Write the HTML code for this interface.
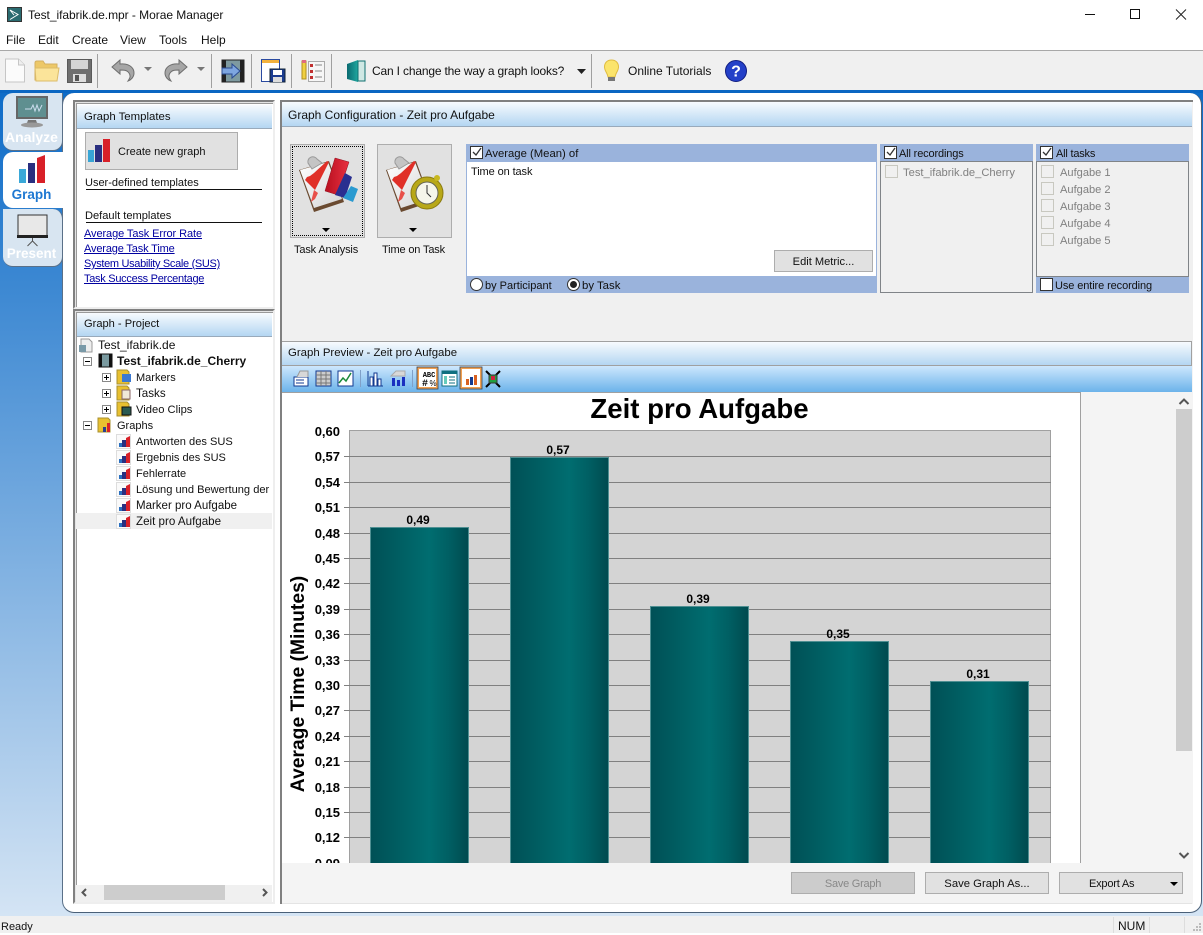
<!DOCTYPE html>
<html><head><meta charset="utf-8">
<style>
html,body{margin:0;padding:0}
body{width:1203px;height:933px;overflow:hidden;position:relative;background:#fff;font-family:"Liberation Sans",sans-serif;font-size:12px;color:#111}
.a,.t,svg{position:absolute}
.t{white-space:nowrap;line-height:16px}
.hd{position:absolute;background:linear-gradient(#f7fbfe,#b4d6f2);box-sizing:border-box;white-space:nowrap;line-height:16px}
.btn{position:absolute;box-sizing:border-box;background:#e1e1e1;border:1px solid #adadad;text-align:center;line-height:22px}
.lnk{color:#0000a0;text-decoration:underline;font-size:11px}
.cb{position:absolute;box-sizing:border-box;width:13px;height:13px;border:1px solid #333;background:#fff}
.cd{position:absolute;box-sizing:border-box;width:13px;height:13px;border:1px solid #c8c8c0;background:#f0f0f0}
.gr{color:#808080}
.sep{position:absolute;width:1px;background:#a0a0a0;top:54px;height:34px}
.hl{position:absolute;height:1px;background:#111}
.ex{position:absolute;box-sizing:border-box;width:9px;height:9px;border:1px solid #888;background:#fff}
.ex:before{content:"";position:absolute;left:1px;top:3px;width:5px;height:1px;background:#000}
.ex.p:after{content:"";position:absolute;left:3px;top:1px;width:1px;height:5px;background:#000}
</style></head><body>

<!-- title bar -->
<svg style="left:7px;top:7px" width="15" height="15" viewBox="0 0 15 15"><rect x=".5" y=".5" width="14" height="14" fill="#2a6b70" stroke="#333"/><path d="M3 3l8 4.500-8 5M3 3l4 5" stroke="#fff" stroke-width="1" fill="none"/></svg>
<div class="t" style="left:28px;top:7px;font-size:12px;letter-spacing:-.04px">Test_ifabrik.de.mpr - Morae Manager</div>
<svg style="left:1080px;top:8px" width="115" height="14" viewBox="0 0 115 14"><path d="M5 6.500h10" stroke="#111"/><rect x="50.500" y="1.500" width="9" height="9" fill="none" stroke="#111"/><path d="M96 1.500l10 10M106 1.500l-10 10" stroke="#222"/></svg>

<!-- menu -->
<div class="t" style="left:6px;top:32px">File</div>
<div class="t" style="left:38px;top:32px">Edit</div>
<div class="t" style="left:72px;top:32px">Create</div>
<div class="t" style="left:120px;top:32px">View</div>
<div class="t" style="left:159px;top:32px">Tools</div>
<div class="t" style="left:201px;top:32px">Help</div>

<!-- toolbar -->
<div class="a" style="left:0;top:50px;width:1203px;height:41px;background:#f0f0f0;border-top:1px solid #a8a8a8;box-sizing:border-box"></div>
<div class="a" style="left:0;top:90px;width:1203px;height:3px;background:#0a66c2"></div>
<svg style="left:4px;top:58px" width="22" height="26" viewBox="0 0 22 26"><path d="M1.500 1h13l6 6v17h-19z" fill="#fbfbfb" stroke="#c6c6c6"/><path d="M14.500 1v6h6" fill="#eee" stroke="#c6c6c6"/></svg>
<svg style="left:34px;top:59px" width="26" height="24" viewBox="0 0 26 24"><path d="M1 4q0-2 2-2h6l2 3h12v16H1z" fill="#edc868" stroke="#d4b060"/><path d="M1 9h24l-2 13H2z" fill="#fbe49a" stroke="#dcbc6a"/></svg>
<svg style="left:67px;top:59px" width="25" height="24" viewBox="0 0 25 24"><rect x=".5" y=".5" width="24" height="23" fill="#6f6f6f" stroke="#5a5a5a"/><rect x="4" y="1" width="17" height="9" fill="#d4d4d4"/><rect x="6" y="15" width="13" height="8" fill="#dedede"/><rect x="8" y="16" width="4" height="6" fill="#555"/></svg>
<div class="sep" style="left:97px"></div>
<svg style="left:110px;top:58px" width="26" height="24" viewBox="0 0 26 24"><path d="M2 9l8-7v4c8-1 14 3 14 9 0 4-3 7-6 8 2-3 3-5 1-8-2-3-5-3-9-3v4z" fill="#a6a6a6" stroke="#6e6e6e"/></svg>
<svg style="left:144px;top:67px" width="8" height="5"><path d="M0 0h8l-4 4z" fill="#777"/></svg>
<svg style="left:163px;top:58px" width="26" height="24" viewBox="0 0 26 24"><path d="M24 9l-8-7v4C8 5 2 9 2 15c0 4 3 7 6 8-2-3-3-5-1-8 2-3 5-3 9-3v4z" fill="#a6a6a6" stroke="#6e6e6e"/></svg>
<svg style="left:197px;top:67px" width="8" height="5"><path d="M0 0h8l-4 4z" fill="#777"/></svg>
<div class="sep" style="left:211px"></div>
<svg style="left:221px;top:59px" width="24" height="24" viewBox="0 0 24 24"><rect x="1" y="1" width="22" height="22" fill="#7e9aa0" stroke="#222"/><rect x="1" y="1" width="4" height="22" fill="#222"/><rect x="19" y="1" width="4" height="22" fill="#222"/><path d="M1 9h10V5l8 7-8 7v-4H1z" fill="#7ea6e0" stroke="#2a4a90"/></svg>
<div class="sep" style="left:251px"></div>
<svg style="left:261px;top:59px" width="25" height="24" viewBox="0 0 25 24"><rect x=".5" y=".5" width="18" height="22" fill="#fff" stroke="#2a4aa0"/><rect x="1" y="1" width="17" height="3" fill="#f3b23c"/><rect x="9" y="10" width="15" height="13" fill="#1c3c90" stroke="#123"/><rect x="12" y="11" width="9" height="5" fill="#fff"/><rect x="12" y="18" width="9" height="5" fill="#ddd"/></svg>
<div class="sep" style="left:291px"></div>
<svg style="left:301px;top:60px" width="24" height="22" viewBox="0 0 24 22"><rect x="1" y="1" width="4" height="18" fill="#f0d040" stroke="#b09020"/><rect x="1" y="0" width="4" height="3" fill="#e06a80"/><rect x="7.500" y="1.500" width="16" height="20" fill="#f6f6f6" stroke="#aaa"/><rect x="9" y="4" width="3" height="3" fill="#c03030"/><rect x="9" y="10" width="3" height="3" fill="#c03030"/><rect x="9" y="16" width="3" height="3" fill="#c03030"/><path d="M14 5h7M14 11h7M14 17h7" stroke="#888"/></svg>
<div class="sep" style="left:331px"></div>
<svg style="left:346px;top:60px" width="20" height="22" viewBox="0 0 20 22"><defs><linearGradient id="dr" x1="0" x2="1"><stop offset="0" stop-color="#0a6a70"/><stop offset="1" stop-color="#20a8a0"/></linearGradient></defs><path d="M1 4l11-4v22L1 19z" fill="url(#dr)"/><rect x="12" y="1" width="7" height="20" fill="#cfe8e4" stroke="#0f6f70"/></svg>
<div class="t" style="left:372px;top:63px;letter-spacing:-.17px">Can I change the way a graph looks?</div>
<svg style="left:577px;top:69px" width="9" height="5"><path d="M0 0h9l-4.500 5z" fill="#222"/></svg>
<div class="sep" style="left:591px"></div>
<svg style="left:604px;top:59px" width="17" height="24" viewBox="0 0 17 24"><path d="M7.500 1C3 1 0.500 4 0.500 8c0 4 3 6 3.500 10h7c.5-4 3.500-6 3.500-10 0-4-2.500-7-7-7z" fill="#fbe46c" stroke="#e0bc40"/><rect x="4" y="18" width="7" height="4" fill="#777"/></svg>
<div class="t" style="left:628px;top:63px">Online Tutorials</div>
<svg style="left:725px;top:60px" width="22" height="22" viewBox="0 0 22 22"><circle cx="11" cy="11" r="10.500" fill="#2440c8" stroke="#101c80"/><text x="11" y="16.500" text-anchor="middle" font-family="Liberation Sans" font-weight="bold" font-size="16" fill="#fff">?</text></svg>

<!-- blue area -->
<div class="a" style="left:0;top:93px;width:1203px;height:823px;background:linear-gradient(#0e6cc8,#d4e4f4)"></div>
<div class="a" style="left:62px;top:93px;width:1140px;height:820px;background:#fff;border-radius:12px;border-right:1px solid #4a6078;border-bottom:1px solid #4a6078;border-left:1px solid #5a7088;box-sizing:border-box"></div>
<div class="a" style="left:0;top:916px;width:1203px;height:17px;background:#f0f0f0"></div>
<div class="t" style="left:1px;top:919px;font-size:11px">Ready</div>
<div class="a" style="left:1113px;top:917px;width:1px;height:16px;background:#ddd"></div>
<div class="a" style="left:1149px;top:917px;width:1px;height:16px;background:#ddd"></div>
<div class="a" style="left:1184px;top:917px;width:1px;height:16px;background:#ddd"></div>
<div class="t" style="left:1118px;top:918px">NUM</div>
<svg style="left:1192px;top:922px" width="10" height="10"><path d="M7 1h2v2H7zM4 4h2v2H4zM7 4h2v2H7zM1 7h2v2H1zM4 7h2v2H4zM7 7h2v2H7z" fill="#bbb"/></svg>

<!-- side tabs -->
<div class="a" style="left:3px;top:93px;width:60px;height:58px;background:#d8e5f1;border-radius:10px 0 10px 10px;border-right:1px solid #5a7088;border-bottom:1px solid #5a7088;box-sizing:border-box"></div>
<svg style="left:15px;top:96px" width="34" height="34" viewBox="0 0 34 34"><rect x="2" y="1" width="30" height="21" fill="#5f8f90" stroke="#666" stroke-width="2"/><path d="M10 13h6l2-4 2 6 2-6 2 6 3-6" stroke="#cde" fill="none"/><path d="M13 24h8l1 3h-10z" fill="#777"/><ellipse cx="17" cy="29" rx="11" ry="2.500" fill="#999"/></svg>
<div class="t" style="left:0;top:129px;width:63px;text-align:center;font-weight:bold;font-size:14px;color:#fff">Analyze</div>
<div class="a" style="left:3px;top:152px;width:60px;height:56px;background:#fff;border-radius:10px 0 0 10px"></div>
<svg style="left:18px;top:155px" width="29" height="30" viewBox="0 0 29 30"><rect x="1" y="14" width="7" height="14" fill="#3aa8d8"/><rect x="10" y="8" width="7" height="20" fill="#2a2f80"/><path d="M19 3l8-3v28h-8z" fill="#d82028"/></svg>
<div class="t" style="left:0;top:187px;width:63px;text-align:center;font-weight:bold;font-size:13.500px;color:#1e78d2">Graph</div>
<div class="a" style="left:3px;top:209px;width:60px;height:58px;background:#d8e5f1;border-radius:0 10px 10px 10px;border-right:1px solid #5a7088;border-bottom:1px solid #5a7088;box-sizing:border-box"></div>
<svg style="left:17px;top:214px" width="31" height="33" viewBox="0 0 31 33"><rect x="1" y="1" width="29" height="21" fill="#e8e8e8" stroke="#333"/><rect x="0" y="21" width="31" height="3" fill="#222"/><path d="M15.500 24v3l-5 5M15.500 27l5 5" stroke="#555" fill="none"/></svg>
<div class="t" style="left:0;top:246px;width:63px;text-align:center;font-weight:bold;font-size:13.500px;color:#fff">Present</div>

<!-- Left panel: Templates -->
<div class="a" style="left:73px;top:100px;width:202px;height:209px;border:2px solid #808080;border-right-color:#eee;border-bottom-color:#eee;box-sizing:border-box;box-shadow:inset 1px 1px 0 #e4e4e4,inset 2px 2px 0 #999"></div>
<div class="hd" style="left:77px;top:105px;width:195px;height:24px;border-bottom:1px solid #9ab;padding:4px 7px;font-size:11.400px">Graph Templates</div>
<div class="a" style="left:85px;top:132px;width:153px;height:38px;background:#e1e1e1;border:1px solid #adadad;box-sizing:border-box"></div>
<svg style="left:87px;top:138px" width="24" height="25" viewBox="0 0 24 25"><rect x="1" y="12" width="6" height="12" fill="#38a5d5"/><rect x="8" y="7" width="7" height="17" fill="#2a2f80"/><rect x="16" y="1" width="7" height="23" fill="#d82028"/></svg>
<div class="t" style="left:118px;top:144px;font-size:11px">Create new graph</div>
<div class="t" style="left:85px;top:175px;font-size:11px">User-defined templates</div>
<div class="hl" style="left:86px;top:189px;width:176px"></div>
<div class="t" style="left:85px;top:208px;font-size:11.100px">Default templates</div>
<div class="hl" style="left:86px;top:222px;width:176px"></div>
<div class="t lnk" style="left:84px;top:226px;letter-spacing:-.09px">Average Task Error Rate</div>
<div class="t lnk" style="left:84px;top:241px;letter-spacing:-.15px">Average Task Time</div>
<div class="t lnk" style="left:84px;top:256px;letter-spacing:-.32px">System Usability Scale (SUS)</div>
<div class="t lnk" style="left:84px;top:271px;letter-spacing:-.28px">Task Success Percentage</div>

<!-- Left panel: Project -->
<div class="a" style="left:73px;top:309px;width:202px;height:595px;border:2px solid #808080;border-right-color:#eee;border-bottom-color:#eee;box-sizing:border-box;box-shadow:inset 1px 1px 0 #e4e4e4,inset 2px 2px 0 #999"></div>
<div class="hd" style="left:77px;top:313px;width:195px;height:24px;border-bottom:1px solid #9ab;padding:3px 7px;font-size:11.100px">Graph - Project</div>

<svg style="left:78px;top:338px" width="16" height="15" viewBox="0 0 16 15"><path d="M3 1h8l3 3v10H3z" fill="#eee" stroke="#999"/><rect x="1" y="7" width="7" height="7" fill="#7a9aa8"/></svg>
<div class="t" style="left:98px;top:337px">Test_ifabrik.de</div>
<div class="ex" style="left:83px;top:357px"></div>
<svg style="left:98px;top:353px" width="15" height="15" viewBox="0 0 15 15"><rect x="1" y="1" width="13" height="13" fill="#7a9aa0" stroke="#111"/><rect x="1" y="1" width="3" height="13" fill="#111"/><rect x="11" y="1" width="3" height="13" fill="#111"/></svg>
<div class="t" style="left:117px;top:353px;font-weight:bold;font-size:12px">Test_ifabrik.de_Cherry</div>

<div class="ex p" style="left:102px;top:373px"></div>
<svg style="left:116px;top:369px" width="16" height="16" viewBox="0 0 16 16"><path d="M1 1h10l2 2v12H1z" fill="#e8c030" stroke="#a89030"/><rect x="6" y="5" width="9" height="8" fill="#3a78d0"/></svg>
<div class="t" style="left:136px;top:370px;font-size:11px">Markers</div>
<div class="ex p" style="left:102px;top:389px"></div>
<svg style="left:116px;top:385px" width="16" height="16" viewBox="0 0 16 16"><path d="M1 1h10l2 2v12H1z" fill="#e8c030" stroke="#a89030"/><rect x="6" y="5" width="8" height="9" fill="#f0e8d8" stroke="#866"/></svg>
<div class="t" style="left:136px;top:386px;font-size:11.600px">Tasks</div>
<div class="ex p" style="left:102px;top:405px"></div>
<svg style="left:116px;top:401px" width="16" height="16" viewBox="0 0 16 16"><path d="M1 1h10l2 2v12H1z" fill="#e8c030" stroke="#a89030"/><rect x="6" y="6" width="9" height="8" fill="#2a5a50" stroke="#111"/></svg>
<div class="t" style="left:136px;top:402px;font-size:11.200px">Video Clips</div>
<div class="ex" style="left:83px;top:421px"></div>
<svg style="left:97px;top:417px" width="17" height="16" viewBox="0 0 17 16"><path d="M1 1h10l2 2v12H1z" fill="#e8c030" stroke="#a89030"/><rect x="6" y="10" width="3" height="5" fill="#2a3f90"/><rect x="10" y="6" width="3" height="9" fill="#d82028"/></svg>
<div class="t" style="left:117px;top:418px;font-size:11px">Graphs</div>

<div class="a" style="left:76px;top:513px;width:196px;height:16px;background:#f0f0f0"></div>
<svg style="left:116px;top:434px" width="16" height="96" viewBox="0 0 16 96">
<g><rect x=".5" y=".5" width="14" height="14" fill="#fafafa" stroke="#ddd"/><rect x="3" y="9" width="3" height="4" fill="#2a70c0"/><rect x="6" y="6" width="4" height="7" fill="#2a2f80"/><path d="M10 4l4-2v11h-4z" fill="#d82028"/></g>
<g transform="translate(0,16)"><rect x=".5" y=".5" width="14" height="14" fill="#fafafa" stroke="#ddd"/><rect x="3" y="9" width="3" height="4" fill="#2a70c0"/><rect x="6" y="6" width="4" height="7" fill="#2a2f80"/><path d="M10 4l4-2v11h-4z" fill="#d82028"/></g>
<g transform="translate(0,32)"><rect x=".5" y=".5" width="14" height="14" fill="#fafafa" stroke="#ddd"/><rect x="3" y="9" width="3" height="4" fill="#2a70c0"/><rect x="6" y="6" width="4" height="7" fill="#2a2f80"/><path d="M10 4l4-2v11h-4z" fill="#d82028"/></g>
<g transform="translate(0,48)"><rect x=".5" y=".5" width="14" height="14" fill="#fafafa" stroke="#ddd"/><rect x="3" y="9" width="3" height="4" fill="#2a70c0"/><rect x="6" y="6" width="4" height="7" fill="#2a2f80"/><path d="M10 4l4-2v11h-4z" fill="#d82028"/></g>
<g transform="translate(0,64)"><rect x=".5" y=".5" width="14" height="14" fill="#fafafa" stroke="#ddd"/><rect x="3" y="9" width="3" height="4" fill="#2a70c0"/><rect x="6" y="6" width="4" height="7" fill="#2a2f80"/><path d="M10 4l4-2v11h-4z" fill="#d82028"/></g>
<g transform="translate(0,80)"><rect x=".5" y=".5" width="14" height="14" fill="#fafafa" stroke="#ddd"/><rect x="3" y="9" width="3" height="4" fill="#2a70c0"/><rect x="6" y="6" width="4" height="7" fill="#2a2f80"/><path d="M10 4l4-2v11h-4z" fill="#d82028"/></g>
</svg>
<div class="t" style="left:136px;top:434px;font-size:11.100px">Antworten des SUS</div>
<div class="t" style="left:136px;top:450px;font-size:11px">Ergebnis des SUS</div>
<div class="t" style="left:136px;top:466px;font-size:11px">Fehlerrate</div>
<div class="a" style="left:136px;top:482px;width:136px;height:16px;overflow:hidden"><div class="t" style="left:0;top:0;font-size:11.100px">Lösung und Bewertung der</div></div>
<div class="t" style="left:136px;top:498px;font-size:11.500px">Marker pro Aufgabe</div>
<div class="t" style="left:136px;top:514px;font-size:11.600px">Zeit pro Aufgabe</div>

<!-- h scrollbar -->
<div class="a" style="left:76px;top:885px;width:196px;height:17px;background:#f0f0f0"></div>
<div class="a" style="left:104px;top:885px;width:121px;height:15px;background:#cdcdcd"></div>
<svg style="left:81px;top:888px" width="190" height="10" viewBox="0 0 190 10"><path d="M5 1L1.500 4.500 5 8M182 1l3.500 3.500L182 8" stroke="#555" stroke-width="2" fill="none"/></svg>

<!-- Config panel -->
<div class="a" style="left:280px;top:100px;width:913px;height:241px;background:#f0f0f0;border-top:2px solid #808080;border-left:2px solid #808080;box-sizing:border-box"></div>
<div class="hd" style="left:282px;top:102px;width:910px;height:25px;border-bottom:1px solid #9ab;padding:5px 6px">Graph Configuration - Zeit pro Aufgabe</div>

<!-- Task analysis -->
<div class="a" style="left:290px;top:144px;width:75px;height:94px;background:#e1e1e1;border:1px solid #adadad;box-sizing:border-box"></div>
<div class="a" style="left:292px;top:146px;width:71px;height:90px;border:1px dotted #000;box-sizing:border-box"></div>
<div class="a" style="left:377px;top:144px;width:75px;height:94px;background:#e1e1e1;border:1px solid #adadad;box-sizing:border-box"></div>
<svg style="left:0;top:0" width="460" height="240" viewBox="0 0 460 240">
<defs>
<linearGradient id="ppr" x1="0" y1="0" x2="1" y2="1"><stop offset="0" stop-color="#fff"/><stop offset="1" stop-color="#d4d4d4"/></linearGradient>
<linearGradient id="rd" x1="0" x2="1"><stop offset="0" stop-color="#b81020"/><stop offset="1" stop-color="#e83040"/></linearGradient>
<g id="board"><path d="M299 170l30-9 15 41-30 10z" fill="#6a4a30"/><path d="M300 170l28-8 14 37-28 9z" fill="url(#ppr)"/><path d="M308 163a5 5 0 0 1 9-4l5 4-10 6z" fill="#c4c4c4" stroke="#999"/><path d="M305 180l10 10 14-28-2-1-13 12-4 3-3 1z" fill="#e03028"/><path d="M314 190l-3 12 4-3 3-6z" fill="#e8504a"/></g>
</defs>
<use href="#board"/>
<path d="M335 158l14 4-11 33-13-4z" fill="url(#rd)" stroke="#901020" stroke-width=".5"/>
<path d="M345 173l7 4-7 21-10-3z" fill="#2a2f90"/>
<path d="M351 186l7 3-5 13-10-4z" fill="#2a9ad0"/>
<g transform="translate(87,0)"><use href="#board"/></g>
<circle cx="427" cy="193" r="16" fill="#b8a818" stroke="#8a7a10"/>
<circle cx="427" cy="193" r="11" fill="#f6f6ea" stroke="#665"/>
<path d="M427 185v8l4 4" stroke="#333" fill="none"/>
<circle cx="437" cy="178" r="3" fill="#c8b820"/>
</svg>
<svg style="left:322px;top:228px" width="8" height="5"><path d="M0 0h8l-4 4z" fill="#000"/></svg>
<div class="t" style="left:294px;top:242px;font-size:11px;letter-spacing:-.15px">Task Analysis</div>
<!-- Time on Task -->
<svg style="left:409px;top:228px" width="8" height="5"><path d="M0 0h8l-4 4z" fill="#000"/></svg>
<div class="t" style="left:382px;top:242px;font-size:11px;letter-spacing:-.15px">Time on Task</div>

<!-- Average box -->
<div class="a" style="left:466px;top:144px;width:411px;height:149px;background:#9ab3dc"></div>
<div class="a" style="left:467px;top:162px;width:409px;height:114px;background:#fff"></div>
<div class="cb" style="left:470px;top:146px"></div>
<svg style="left:470px;top:146px" width="13" height="13"><path d="M3 6l3 3 5-7" stroke="#333" stroke-width="1.300" fill="none"/></svg>
<div class="t" style="left:485px;top:146px;font-size:11.300px">Average (Mean) of</div>
<div class="t" style="left:471px;top:164px;font-size:11px;letter-spacing:-.1px">Time on task</div>
<div class="btn" style="left:774px;top:250px;width:99px;height:22px;font-size:11.100px">Edit Metric...</div>
<svg style="left:469px;top:277px" width="15" height="15"><circle cx="7.500" cy="7.500" r="6" fill="#fff" stroke="#333"/></svg>
<div class="t" style="left:485px;top:278px;font-size:11px">by Participant</div>
<svg style="left:566px;top:277px" width="15" height="15"><circle cx="7.500" cy="7.500" r="6" fill="#fff" stroke="#333"/><circle cx="7.500" cy="7.500" r="3.500" fill="#222"/></svg>
<div class="t" style="left:582px;top:278px;font-size:11.400px">by Task</div>

<!-- All recordings -->
<div class="a" style="left:880px;top:144px;width:153px;height:18px;background:#9ab3dc"></div>
<div class="a" style="left:880px;top:161px;width:153px;height:132px;border:1px solid #808488;box-sizing:border-box;background:#f0f0f0"></div>
<div class="cb" style="left:884px;top:146px"></div>
<svg style="left:884px;top:146px" width="13" height="13"><path d="M3 6l3 3 5-7" stroke="#333" stroke-width="1.300" fill="none"/></svg>
<div class="t" style="left:899px;top:146px;font-size:11px;letter-spacing:-.15px">All recordings</div>
<div class="cd" style="left:885px;top:165px"></div>
<div class="t gr" style="left:903px;top:165px;font-size:11.200px">Test_ifabrik.de_Cherry</div>

<!-- All tasks -->
<div class="a" style="left:1036px;top:144px;width:153px;height:149px;background:#9ab3dc"></div>
<div class="a" style="left:1036px;top:161px;width:153px;height:116px;border:1px solid #808488;box-sizing:border-box;background:#f0f0f0"></div>
<div class="cb" style="left:1040px;top:146px"></div>
<svg style="left:1040px;top:146px" width="13" height="13"><path d="M3 6l3 3 5-7" stroke="#333" stroke-width="1.300" fill="none"/></svg>
<div class="t" style="left:1056px;top:146px;font-size:11px;letter-spacing:-.2px">All tasks</div>
<div class="cd" style="left:1041px;top:165px"></div><div class="t gr" style="left:1060px;top:165px;font-size:11.100px">Aufgabe 1</div>
<div class="cd" style="left:1041px;top:182px"></div><div class="t gr" style="left:1060px;top:182px;font-size:11.100px">Aufgabe 2</div>
<div class="cd" style="left:1041px;top:199px"></div><div class="t gr" style="left:1060px;top:199px;font-size:11.100px">Aufgabe 3</div>
<div class="cd" style="left:1041px;top:216px"></div><div class="t gr" style="left:1060px;top:216px;font-size:11.100px">Aufgabe 4</div>
<div class="cd" style="left:1041px;top:233px"></div><div class="t gr" style="left:1060px;top:233px;font-size:11.100px">Aufgabe 5</div>
<div class="cb" style="left:1040px;top:278px"></div>
<div class="t" style="left:1055px;top:278px;font-size:11px;letter-spacing:-.1px">Use entire recording</div>

<!-- Preview -->
<div class="a" style="left:280px;top:341px;width:913px;height:563px;background:#f4f4f4;border-left:2px solid #808080;box-sizing:border-box"></div>
<div class="hd" style="left:282px;top:341px;width:910px;height:25px;border:1px solid #a0a0a0;border-left:0;padding:3px 6px;font-size:11.400px">Graph Preview - Zeit pro Aufgabe</div>
<div class="a" style="left:282px;top:366px;width:910px;height:26px;background:linear-gradient(#cde7fd,#6cb3ea)"></div>
<svg style="left:292px;top:368px;overflow:visible" width="212" height="22" viewBox="0 0 212 22">
<rect x="2" y="9" width="14" height="9" fill="#fff" stroke="#123a90"/><path d="M4 12h8M4 15h8" stroke="#123a90"/><path d="M5 9l3-6h8v6" fill="#d8d8d8" stroke="#999"/>
<rect x="24" y="3" width="15" height="15" fill="#ccc" stroke="#123a90"/><path d="M24 7h15M24 11h15M24 15h15M29 3v15M34 3v15" stroke="#777"/>
<rect x="46" y="3" width="15" height="15" fill="#fff" stroke="#123a90"/><path d="M47 15l4-5 3 3 5-8" stroke="#1a8a3a" fill="none" stroke-width="1.500"/>
<rect x="68" y="2" width="1" height="17" fill="#7fa0c8"/>
<path d="M76 18V3M76 18h15" stroke="#123a90"/><rect x="78" y="9" width="3" height="9" fill="#fff" stroke="#123a90"/><rect x="82" y="5" width="3" height="13" fill="#fff" stroke="#123a90"/><rect x="86" y="11" width="3" height="7" fill="#fff" stroke="#123a90"/>
<path d="M99 8l5-5h9v5z" fill="#d8d8d8" stroke="#aaa"/><rect x="100" y="10" width="3" height="8" fill="#1a30c0"/><rect x="105" y="12" width="3" height="6" fill="#1a30c0"/><rect x="110" y="9" width="3" height="9" fill="#1a30c0"/>
<rect x="120" y="2" width="1" height="17" fill="#7fa0c8"/>
<rect x="126" y="0" width="19" height="20" fill="#fff" stroke="#f2a050" stroke-width="2"/><rect x="125" y="-1" width="21" height="22" fill="none" stroke="#345" stroke-width=".8"/><text x="137" y="9" font-family="Liberation Mono" font-size="7" font-weight="bold" text-anchor="middle">ABC</text><text x="133" y="18" font-family="Liberation Mono" font-size="10" font-weight="bold" text-anchor="middle">#</text><text x="141" y="18" font-family="Liberation Sans" font-size="8" text-anchor="middle">%</text>
<rect x="150" y="3" width="15" height="15" fill="#fff" stroke="#0f6f80"/><rect x="150" y="3" width="15" height="3" fill="#0f6f80"/><rect x="152" y="8" width="3" height="8" fill="#6cb"/><path d="M157 9h6M157 12h6M157 15h6" stroke="#0f6f80"/>
<rect x="169" y="0" width="20" height="20" fill="#fff" stroke="#f2a050" stroke-width="2"/><rect x="168" y="-1" width="22" height="22" fill="none" stroke="#345" stroke-width=".8"/><rect x="174" y="11" width="3" height="6" fill="#d86020"/><rect x="178" y="9" width="3" height="8" fill="#123a90"/><rect x="182" y="7" width="3" height="10" fill="#d86020"/>
<path d="M194 3l4 4M208 3l-4 4M194 19l4-4M208 19l-4-4" stroke="#000" stroke-width="2"/><rect x="197" y="7" width="8" height="8" fill="#20a040" stroke="#333"/><rect x="199" y="8" width="4" height="4" fill="#d02040"/>
</svg>

<!-- chart -->
<div class="a" style="left:282px;top:392px;width:799px;height:471px;background:#fff;border-right:1px solid #a0a0a0;border-top:1px solid #a0a0a0;box-sizing:border-box;overflow:hidden">
<svg style="left:-282px;top:-393px" width="1203" height="933" viewBox="0 0 1203 933">
<defs><linearGradient id="b" x1="0" x2="1" y1="0" y2="0"><stop offset="0" stop-color="#005056"/><stop offset=".25" stop-color="#005c60"/><stop offset=".6" stop-color="#006d70"/><stop offset=".8" stop-color="#005f63"/><stop offset="1" stop-color="#004a4f"/></linearGradient></defs>
<text x="699.500" y="418" text-anchor="middle" font-family="Liberation Sans" font-size="27.600" font-weight="bold" fill="#000">Zeit pro Aufgabe</text>
<rect x="349.500" y="430.500" width="701" height="450" fill="#d4d4d4" stroke="#a0a0a0"/>
<g stroke="#808080"><path d="M344 456.500h707M344 482.500h707M344 507.500h707M344 533.500h707M344 558.500h707M344 583.500h707M344 609.500h707M344 634.500h707M344 660.500h707M344 685.500h707M344 710.500h707M344 736.500h707M344 761.500h707M344 787.500h707M344 812.500h707M344 837.500h707M344 863.500h707"/></g>
<g font-family="Liberation Sans" font-size="13" font-weight="bold" fill="#000" text-anchor="end">
<text x="340" y="436">0,60</text><text x="340" y="461">0,57</text><text x="340" y="487">0,54</text><text x="340" y="512">0,51</text><text x="340" y="538">0,48</text><text x="340" y="563">0,45</text><text x="340" y="588">0,42</text><text x="340" y="614">0,39</text><text x="340" y="639">0,36</text><text x="340" y="665">0,33</text><text x="340" y="690">0,30</text><text x="340" y="715">0,27</text><text x="340" y="741">0,24</text><text x="340" y="766">0,21</text><text x="340" y="792">0,18</text><text x="340" y="817">0,15</text><text x="340" y="842">0,12</text><text x="340" y="868">0,09</text>
</g>
<text transform="translate(304,684) rotate(-90)" text-anchor="middle" font-family="Liberation Sans" font-size="19.300" font-weight="bold" fill="#000">Average Time (Minutes)</text>
<g fill="url(#b)" stroke="#4f8f92">
<rect x="370.500" y="527.500" width="98" height="360"/><rect x="510.500" y="457.500" width="98" height="430"/><rect x="650.500" y="606.500" width="98" height="280"/><rect x="790.500" y="641.500" width="98" height="240"/><rect x="930.500" y="681.500" width="98" height="200"/>
</g>
<g font-family="Liberation Sans" font-size="12" font-weight="bold" fill="#000" text-anchor="middle">
<text x="418" y="524">0,49</text><text x="558" y="454">0,57</text><text x="698" y="603">0,39</text><text x="838" y="638">0,35</text><text x="978" y="678">0,31</text>
</g>
</svg>
</div>

<!-- v scrollbar -->
<div class="a" style="left:1176px;top:409px;width:16px;height:342px;background:#cdcdcd"></div>
<svg style="left:1178px;top:397px" width="12" height="464" viewBox="0 0 12 464"><path d="M1.500 7L6 2.500 10.500 7M1.500 456L6 460.500 10.500 456" stroke="#555" stroke-width="2" fill="none"/></svg>

<!-- bottom -->
<div class="a" style="left:282px;top:863px;width:910px;height:41px;background:#f4f4f4;border-bottom:1px solid #e4e4e4;box-sizing:border-box"></div>
<div class="btn" style="left:791px;top:872px;width:124px;height:22px;background:#ccc;color:#888;font-size:11px;letter-spacing:-.25px">Save Graph</div>
<div class="btn" style="left:925px;top:872px;width:124px;height:22px;font-size:11.300px">Save Graph As...</div>
<div class="btn" style="left:1059px;top:872px;width:124px;height:22px;text-align:left;padding-left:29px;font-size:11px;letter-spacing:-.2px">Export As</div>
<svg style="left:1170px;top:882px" width="8" height="5"><path d="M0 0h8l-4 4z" fill="#000"/></svg>
</body></html>
